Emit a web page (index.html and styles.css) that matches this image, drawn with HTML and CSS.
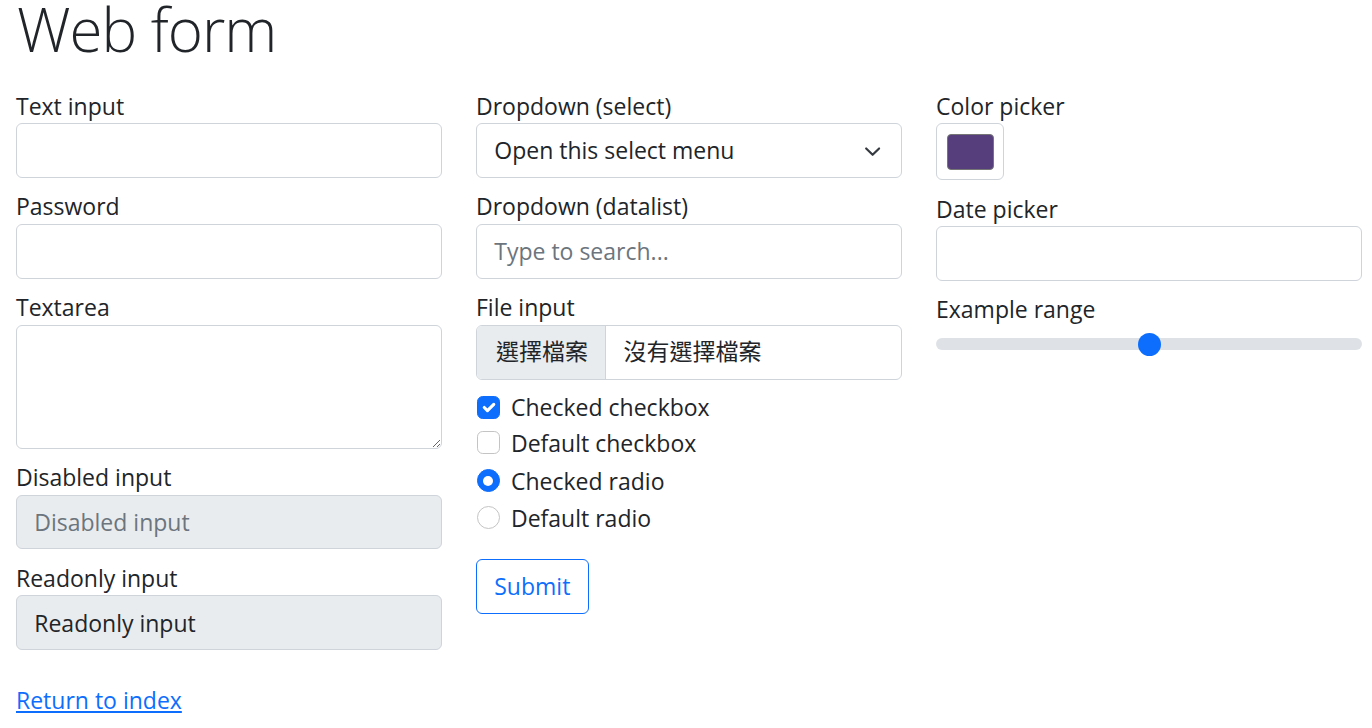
FILE: index.html
```html
<!DOCTYPE html>
<html lang="en">
<head>
<meta charset="utf-8">
<title>Web form</title>
<link rel="stylesheet" href="styles.css">
</head>
<body>
<main class="page">
  <h1 class="title">Web form</h1>
  <form class="form-grid">
    <div class="col">
      <label class="field">Text input
        <input class="control" type="text" name="my-text">
      </label>
      <label class="field">Password
        <input class="control" type="password" name="my-password">
      </label>
      <label class="field">Textarea
        <textarea class="control textarea" name="my-textarea" rows="3"></textarea>
      </label>
      <label class="field">Disabled input
        <input class="control is-muted" type="text" name="my-disabled" placeholder="Disabled input" disabled>
      </label>
      <label class="field">Readonly input
        <input class="control is-muted" type="text" name="my-readonly" value="Readonly input" readonly>
      </label>
    </div>

    <div class="col">
      <label class="field">Dropdown (select)
        <span class="control select">
          <span>Open this select menu</span>
          <svg class="chevron" viewBox="0 0 16 16" width="17" height="17" aria-hidden="true"><path d="m2 5 6 6 6-6" fill="none" stroke="#343a40" stroke-width="2" stroke-linecap="round" stroke-linejoin="round"/></svg>
        </span>
      </label>
      <label class="field">Dropdown (datalist)
        <input class="control" type="text" name="my-datalist" placeholder="Type to search...">
      </label>
      <label class="field">File input
        <span class="control file">
          <span class="file-btn">選擇檔案</span>
          <span class="file-name">沒有選擇檔案</span>
        </span>
      </label>
      <div class="checks">
        <label class="check-row row-1">
          <span class="box checkbox checked"><svg viewBox="0 0 20 20" width="21" height="21" aria-hidden="true"><path d="M6 10l3 3l6-6" fill="none" stroke="#fff" stroke-width="3" stroke-linecap="round" stroke-linejoin="round"/></svg></span>
          <span>Checked checkbox</span>
        </label>
        <label class="check-row row-2">
          <span class="box checkbox"></span>
          <span>Default checkbox</span>
        </label>
        <label class="check-row row-3">
          <span class="box radio checked"><span class="dot"></span></span>
          <span>Checked radio</span>
        </label>
        <label class="check-row row-4">
          <span class="box radio"></span>
          <span>Default radio</span>
        </label>
      </div>
      <div class="actions">
        <button type="button" class="btn-outline">Submit</button>
      </div>
    </div>

    <div class="col">
      <label class="field">Color picker
        <span class="color-box"><span class="swatch"></span></span>
      </label>
      <label class="field">Date picker
        <input class="control" type="text" name="my-date">
      </label>
      <label class="field">Example range
        <input class="range" type="range" name="my-range" min="0" max="10" step="1" value="5">
      </label>
    </div>
  </form>
  <p class="back"><a href="#">Return to index</a></p>
</main>
</body>
</html>
```

FILE: styles.css
```css
* {
  box-sizing: border-box;
}

html,
body {
  margin: 0;
  padding: 0;
  background: #fff;
}

body {
  font-family: "Open Sans", "Noto Sans CJK TC", sans-serif;
  font-size: 23px;
  line-height: 34.5px;
  color: #212529;
}

.page {
  padding: 0 10px 0 16px;
}

.title {
  margin: 0 0 30.5px 0;
  padding-left: 1px;
  font-size: 60px;
  font-weight: 300;
  line-height: 58px;
  letter-spacing: -1px;
  color: #212529;
}

.form-grid {
  display: grid;
  grid-template-columns: repeat(3, 426px);
  column-gap: 34px;
  align-items: start;
}

.col {
  display: flex;
  flex-direction: column;
}

.field {
  display: block;
  margin-bottom: 11.5px;
}

.control {
  display: block;
  width: 100%;
  height: 54.9px;
  margin: 0;
  padding: 0 17.25px;
  font: inherit;
  color: #212529;
  background: #fff;
  border: 1px solid #ced4da;
  border-radius: 6px;
  outline: none;
}

.control::placeholder {
  color: #6c757d;
  opacity: 1;
}

.textarea {
  height: 123.8px;
  padding: 8.6px 17.25px;
  resize: vertical;
}

.is-muted {
  background: #e9ecef;
}

.select {
  display: flex;
  align-items: center;
  justify-content: space-between;
  padding-right: 20px;
}

.chevron {
  display: block;
  width: 17.25px;
  height: 17.25px;
  margin-top: 2px;
}

.file {
  display: flex;
  align-items: stretch;
  padding: 0;
  overflow: hidden;
}

.file-btn {
  display: flex;
  align-items: center;
  padding: 0 17.25px 4px 19px;
  background: #e9ecef;
  border-right: 1px solid #ced4da;
  font-family: "Noto Sans CJK TC", sans-serif;
  color: #212529;
}

.file-name {
  display: flex;
  align-items: center;
  padding: 0 0 4px 17.25px;
  font-family: "Noto Sans CJK TC", sans-serif;
}

.checks {
  display: flex;
  flex-direction: column;
}

.check-row {
  display: flex;
  align-items: flex-start;
  gap: 11.5px;
  padding-left: 0.5px;
}

.row-1 {
  margin-top: -1px;
  margin-bottom: 1px;
}

.row-2 {
  margin-bottom: 3.5px;
}

.row-3 {
  margin-bottom: 2.5px;
}

.row-4 {
  margin-bottom: 2.9px;
}

.box {
  flex: 0 0 23px;
  width: 23px;
  height: 23px;
  margin-top: 5.75px;
  background: #fff;
  border: 1px solid #c4c4c4;
  display: flex;
  align-items: center;
  justify-content: center;
}

.checkbox {
  border-radius: 5.75px;
}

.radio {
  border-radius: 50%;
}

.box.checked {
  background: #0d6efd;
  border-color: #0d6efd;
}

.box svg {
  display: block;
}

.dot {
  width: 10px;
  height: 10px;
  border-radius: 50%;
  background: #fff;
}

.actions {
  margin-top: 21px;
}

.btn-outline {
  height: 54.9px;
  padding: 0 17.25px;
  font: inherit;
  color: #0d6efd;
  background: #fff;
  border: 1px solid #0d6efd;
  border-radius: 6px;
}

.color-box {
  display: block;
  width: 68px;
  height: 57px;
  padding: 9.5px;
  background: #fff;
  border: 1px solid #ced4da;
  border-radius: 6px;
}

.swatch {
  display: block;
  width: 100%;
  height: 100%;
  background: #563d7c;
  border: 1px solid #767676;
  border-radius: 4px;
}

.range {
  -webkit-appearance: none;
  appearance: none;
  display: block;
  width: 100%;
  height: 34.5px;
  margin: 0;
  padding: 0;
  background: transparent;
}

.range::-webkit-slider-runnable-track {
  height: 11.5px;
  background: #dee2e6;
  border: 0;
  border-radius: 11.5px;
}

.range::-webkit-slider-thumb {
  -webkit-appearance: none;
  appearance: none;
  width: 23px;
  height: 23px;
  margin-top: -5.75px;
  background: #0d6efd;
  border: 0;
  border-radius: 50%;
}

.back {
  margin: 21px 0 0 0;
}

.back a {
  color: #0d6efd;
  text-decoration: underline;
}
```
